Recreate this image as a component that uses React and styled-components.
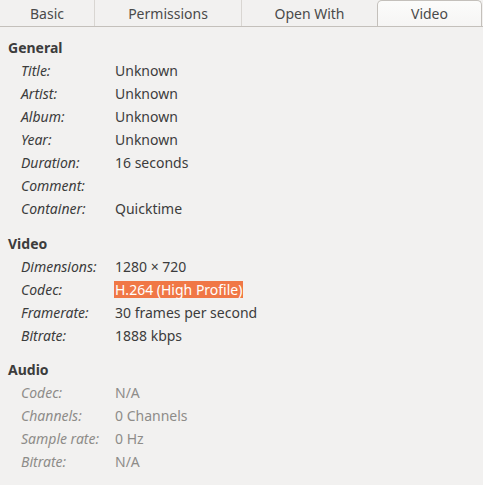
import React from "react";
import styled, { createGlobalStyle } from "styled-components";

const Global = createGlobalStyle`
  html, body { margin: 0; padding: 0; background: #f2f1f0; }
  body { font-family: "Noto Sans", "DejaVu Sans", sans-serif; font-size: 14px; color: #3c3c3c; }
`;

const Window = styled.div`
  width: 483px;
  height: 485px;
  background: #f2f1f0;
  overflow: hidden;
`;

const TabBar = styled.div`
  display: flex;
  height: 26px;
  border-bottom: 1px solid #c4c0bb;
`;

const Tab = styled.div`
  flex: 0 0 ${(p) => p.$w}px;
  display: flex;
  align-items: center;
  justify-content: center;
  box-sizing: border-box;
  color: #4a4a4a;
  border-right: ${(p) => (p.$sep ? "1px solid #d9d6d2" : "none")};
  ${(p) =>
    p.$active &&
    `
    background: linear-gradient(#fcfcfb, #f6f5f4);
    border: 1px solid #c4c0bb;
    border-bottom: none;
    border-radius: 5px 5px 0 0;
  `}
`;

const Content = styled.div`
  padding: 9px 0 0 8px;
  display: flex;
  flex-direction: column;
  gap: 11.5px;
`;

const Section = styled.div`
  display: flex;
  flex-direction: column;
  color: ${(p) => (p.$disabled ? "#8e8c89" : "#3c3c3c")};
`;

const Header = styled.div`
  font-weight: bold;
  height: 23px;
  line-height: 23px;
  color: #3c3c3c;
`;

const Row = styled.div`
  display: grid;
  grid-template-columns: 94px 1fr;
  height: 23px;
  align-items: center;
  justify-items: start;
  padding-left: 13px;
`;

const Label = styled.span`
  font-style: italic;
`;

const Value = styled.span``;

const Selected = styled.span`
  background: #f07746;
  color: #ffffff;
  line-height: 17px;
  padding: 0 1px;
  margin-left: -1px;
`;

const sections = [
  {
    title: "General",
    rows: [
      ["Title:", "Unknown"],
      ["Artist:", "Unknown"],
      ["Album:", "Unknown"],
      ["Year:", "Unknown"],
      ["Duration:", "16 seconds"],
      ["Comment:", ""],
      ["Container:", "Quicktime"],
    ],
  },
  {
    title: "Video",
    rows: [
      ["Dimensions:", "1280 × 720"],
      ["Codec:", "H.264 (High Profile)", true],
      ["Framerate:", "30 frames per second"],
      ["Bitrate:", "1888 kbps"],
    ],
  },
  {
    title: "Audio",
    disabled: true,
    rows: [
      ["Codec:", "N/A"],
      ["Channels:", "0 Channels"],
      ["Sample rate:", "0 Hz"],
      ["Bitrate:", "N/A"],
    ],
  },
];

export default function App() {
  return (
    <Window>
      <Global />
      <TabBar>
        <Tab $w={95} $sep>Basic</Tab>
        <Tab $w={147} $sep>Permissions</Tab>
        <Tab $w={135}>Open With</Tab>
        <Tab $w={105} $active>Video</Tab>
      </TabBar>
      <Content>
        {sections.map((s) => (
          <Section key={s.title} $disabled={s.disabled}>
            <Header>{s.title}</Header>
            {s.rows.map(([l, v, sel]) => (
              <Row key={l}>
                <Label>{l}</Label>
                {sel ? <Selected>{v}</Selected> : <Value>{v}</Value>}
              </Row>
            ))}
          </Section>
        ))}
      </Content>
    </Window>
  );
}
